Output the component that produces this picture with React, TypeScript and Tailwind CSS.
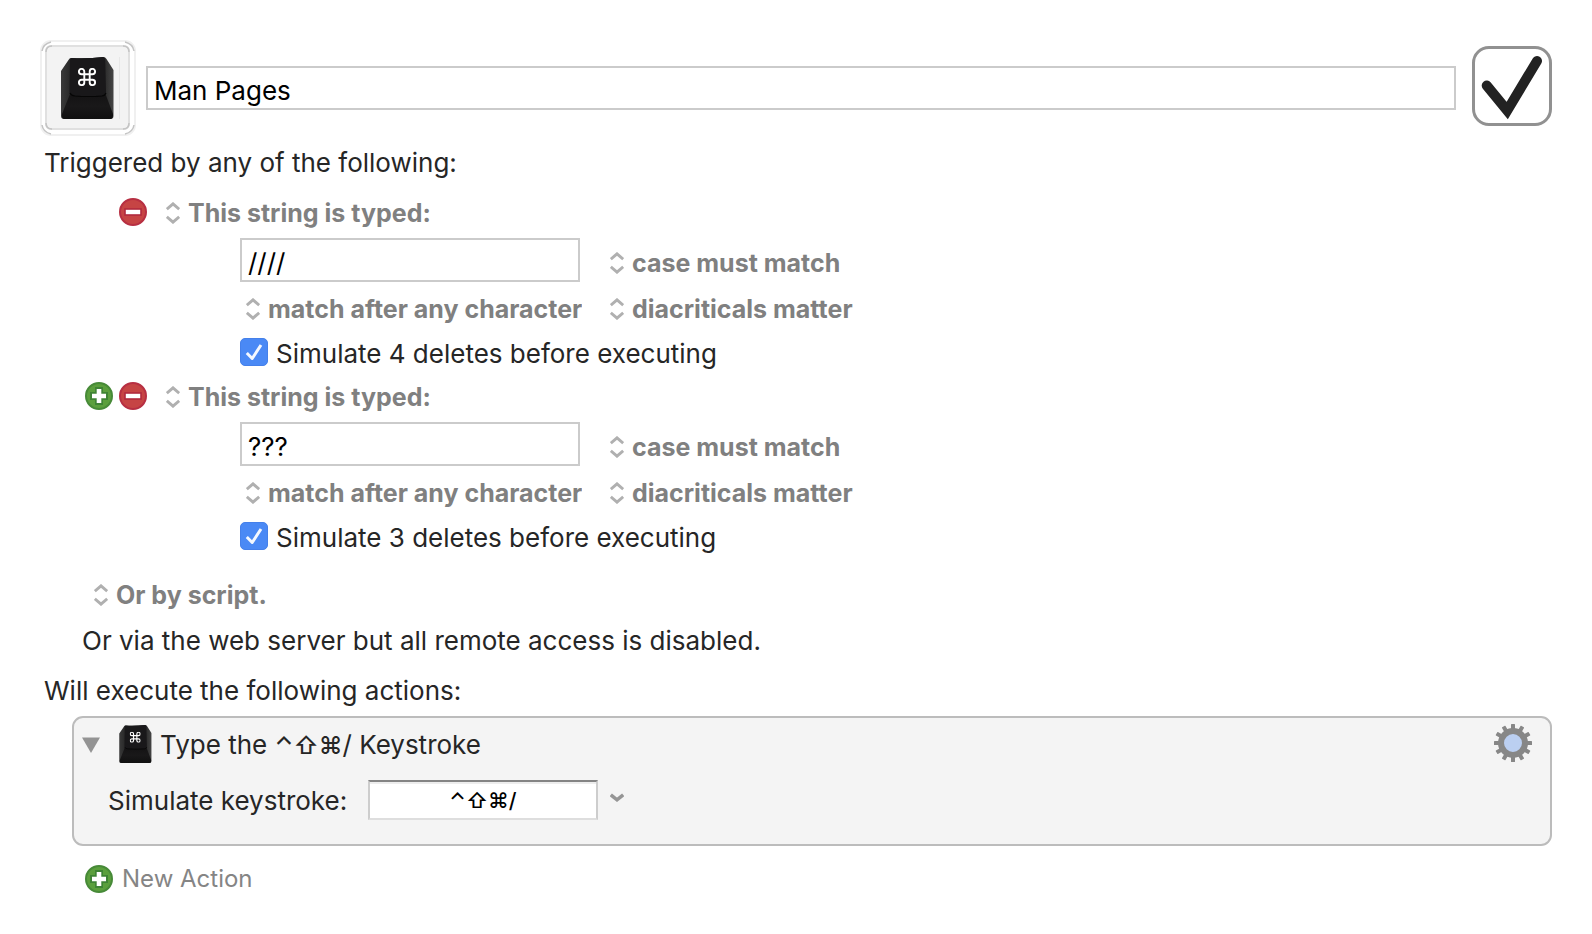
import { useState } from "react";

function CommandGlyph({ x, y, size, width }: { x: number; y: number; size: number; width: number }) {
  return (
    <svg x={x} y={y} width={size} height={size} viewBox="2 2 20 20" fill="none" stroke="#fff" strokeWidth={width}>
      <path d="M15 6v12a3 3 0 1 0 3-3H6a3 3 0 1 0 3 3V6a3 3 0 1 0-3 3h12a3 3 0 1 0-3-3" />
    </svg>
  );
}

function KeyCap({ className, id }: { className: string; id: string }) {
  return (
    <svg className={className} viewBox="0 0 53 62" aria-hidden="true">
      <defs>
        <linearGradient id={id + "-side"} x1="0" x2="1" y1="0" y2="0">
          <stop offset="0" stopColor="#3a3a3a" />
          <stop offset="0.16" stopColor="#2a2a2a" />
          <stop offset="0.5" stopColor="#1a1a1a" />
          <stop offset="0.84" stopColor="#2c2c2c" />
          <stop offset="1" stopColor="#464646" />
        </linearGradient>
        <linearGradient id={id + "-front"} x1="0" x2="0" y1="0" y2="1">
          <stop offset="0" stopColor="#141314" />
          <stop offset="0.5" stopColor="#191819" />
          <stop offset="1" stopColor="#101010" />
        </linearGradient>
      </defs>
      <path d="M10 1Q26 2 42 0Q44.500 0 45.500 2L52.500 13V59Q52.500 62 49.500 62H3Q0 62 0 59V14L7.500 3Q8.500 1 10 1Z" fill={"url(#" + id + "-side)"} />
      <path d="M9 37H44.500L52 57Q52.500 62 49 62H4Q0 62 1 57Z" fill={"url(#" + id + "-front)"} />
      <path d="M11 1Q26 2 42 0Q44 0 44.200 3L45 35Q45 38 42 38.500Q26 40 12 38.500Q8.500 38 8.500 35L9 3Q9 1 11 1Z" fill="#19181a" />
      <path d="M9 36Q10 38.600 14 39Q27 40 41 39Q44 38.600 45 36" fill="none" stroke="#060606" strokeWidth="1.200" />
      <CommandGlyph x={17} y={11} size={18} width={2.1} />
    </svg>
  );
}

function WellFrame() {
  return (
    <svg className="size-24 [grid-area:1/1]" viewBox="0 0 96 96" fill="none" aria-hidden="true">
      <rect x="1" y="1" width="94" height="94" rx="10" stroke="#f0f0f0" strokeWidth="2" />
      <rect x="6" y="6" width="83" height="83" rx="5" fill="#f3f3f3" stroke="#e0e0e0" strokeWidth="2" />
      <g stroke="#c4c4c4" strokeWidth="1.500">
        <path d="M2 11Q3 4 11 2M85 2Q93 4 94 11M94 85Q93 92 85 94M11 94Q3 92 2 85" />
        <path d="M6 12Q6 6 12 6M83 6Q89 6 89 12M89 83Q89 89 83 89M12 89Q6 89 6 83" />
      </g>
      <path d="M79.500 17V79" stroke="#e7e7e7" />
    </svg>
  );
}

function UpDown() {
  return (
    <svg className="h-[22px] w-[14px] shrink-0" viewBox="0 0 14 22" fill="none" stroke="#b0b0b0" strokeWidth="3" aria-hidden="true">
      <path d="M0.800 7.200L7 1.900L13.200 7.200M0.800 14.800L7 20.100L13.200 14.800" />
    </svg>
  );
}

function Menu({ value, label }: { value: string; label: string }) {
  return (
    <label className="flex items-center gap-2">
      <UpDown />
      <select aria-label={label} defaultValue={value} className="field-sizing-content appearance-none bg-transparent text-[25px] leading-8 font-bold text-[#808080] outline-none">
        <option>{value}</option>
      </select>
    </label>
  );
}

function RoundButton({ kind, label }: { kind: "add" | "remove"; label: string }) {
  return (
    <button type="button" aria-label={label} className="size-7 shrink-0">
      <svg className="size-7" viewBox="0 0 28 28" aria-hidden="true">
        {kind === "add" ? (
          <>
            <circle cx="14" cy="14" r="13" fill="#5b9f3d" stroke="#478a38" strokeWidth="2" />
            <path d="M11 6H17V11H22V17H17V22H11V17H6V11H11Z" fill="#fff" stroke="#3f8335" strokeWidth="2" />
            <path d="M11.700 7H16.300V11.700H21V16.300H16.300V21H11.700V16.300H7V11.700H11.700Z" fill="#fff" />
          </>
        ) : (
          <>
            <circle cx="14" cy="14" r="13" fill="#c64444" stroke="#b72f42" strokeWidth="2" />
            <rect x="6" y="11" width="16" height="6" fill="#fff" stroke="#b12a3e" strokeWidth="1.600" />
          </>
        )}
      </svg>
    </button>
  );
}

function StringTrigger({ text, count, addable }: { text: string; count: number; addable: boolean }) {
  const [value, setValue] = useState(text);
  return (
    <section>
      <div className="flex h-10 items-center pl-[85px]">
        <div className="flex w-[62px] justify-end gap-[6px]">
          {addable && <RoundButton kind="add" label="Add trigger" />}
          <RoundButton kind="remove" label="Remove trigger" />
        </div>
        <div className="pt-0.5 pl-[19px]">
          <Menu value="This string is typed:" label="Trigger type" />
        </div>
      </div>
      <div className="grid grid-cols-[340px_auto] justify-start gap-x-[30px] pl-60">
        <div className="flex h-14 items-center">
          <input
            type="text"
            aria-label="Typed string"
            value={value}
            onChange={(e) => setValue(e.target.value)}
            className="h-11 w-full border-2 border-[#cbcbcb] bg-white px-[6px] pt-1 text-[26px] leading-8 text-black outline-none"
          />
        </div>
        <div className="flex h-14 items-center pt-1.5">
          <Menu value="case must match" label="Case" />
        </div>
        <div className="flex h-10 items-center pt-0.5 pl-[6px]">
          <Menu value="match after any character" label="Match position" />
        </div>
        <div className="flex h-10 items-center pt-0.5">
          <Menu value="diacriticals matter" label="Diacriticals" />
        </div>
      </div>
      <label className="flex h-12 items-center gap-2 pl-60">
        <span className="grid size-7 shrink-0">
          <input type="checkbox" defaultChecked className="peer size-7 appearance-none rounded-[5px] border border-[#a0a0a0] [grid-area:1/1] checked:border-[#4580ea] checked:bg-[#4a89f5]" />
          <svg className="invisible size-7 [grid-area:1/1] peer-checked:visible" viewBox="0 0 28 28" fill="none" stroke="#f4f8ff" strokeWidth="3" strokeLinejoin="round" aria-hidden="true">
            <path d="M6.800 15L12.200 20.500L21 7" />
          </svg>
        </span>
        <span className="pt-1">Simulate {count} deletes before executing</span>
      </label>
    </section>
  );
}

const TEETH = [0, 30, 60, 90, 120, 150];

function Gear() {
  return (
    <svg className="size-[38px]" viewBox="0 0 38 38" aria-hidden="true">
      {TEETH.map((angle) => (
        <rect key={angle} x="17" y="0" width="4" height="38" rx="0.500" fill="#878787" transform={"rotate(" + angle + " 19 19)"} />
      ))}
      <circle cx="19" cy="19" r="12" fill="#bbcff1" stroke="#878787" strokeWidth="6" />
    </svg>
  );
}

export default function App() {
  const [name, setName] = useState("Man Pages");
  const [keystroke, setKeystroke] = useState("⌃⇧⌘/");
  return (
    <main className="min-h-screen bg-white pt-10 pb-5 font-['Inter',sans-serif] text-[26px] leading-8 whitespace-nowrap text-[#262626]">
      <header className="flex items-center pr-10 pl-10">
        <button type="button" aria-label="Macro icon" className="grid size-24 shrink-0">
          <WellFrame />
          <KeyCap className="mt-[17px] ml-[21px] h-[62px] w-[53px] [grid-area:1/1]" id="cap-large" />
        </button>
        <input
          type="text"
          aria-label="Macro name"
          value={name}
          onChange={(e) => setName(e.target.value)}
          className="ml-[10px] h-11 min-w-0 flex-1 border-2 border-[#cbcbcb] bg-white px-[6px] pt-1 text-black outline-none"
        />
        <label className="ml-4 grid size-20 shrink-0 self-start pt-[6px]">
          <input type="checkbox" defaultChecked aria-label="Macro enabled" className="peer size-20 appearance-none rounded-[17px] border-3 border-[#919191] bg-white [grid-area:1/1]" />
          <svg className="invisible size-20 [grid-area:1/1] peer-checked:visible" viewBox="0 0 80 80" fill="none" stroke="#222" strokeWidth="10" aria-hidden="true">
            <path d="M14.700 39.500L35.200 64.500L65 15" strokeLinecap="round" strokeMiterlimit="8" />
          </svg>
        </label>
      </header>

      <h2 className="mt-2 flex h-[38px] items-center pl-11">Triggered by any of the following:</h2>

      <div className="pt-[10px]">
        <StringTrigger text="////" count={4} addable={false} />
        <StringTrigger text="???" count={3} addable />
      </div>

      <div className="flex h-[58px] items-center pt-3 pl-[94px]">
        <Menu value="Or by script." label="Script trigger" />
      </div>
      <p className="flex h-11 items-center pt-0.5 pl-[82px]">Or via the web server but all remote access is disabled.</p>

      <h2 className="flex h-[54px] items-center pt-1 pl-11">Will execute the following actions:</h2>

      <section className="mr-10 ml-[72px] rounded-[11px] border-2 border-[#bcbcbc] bg-[#f4f4f4] pb-4">
        <div className="flex h-[54px] items-center pr-[18px] pl-2">
          <button type="button" aria-label="Collapse action" className="shrink-0">
            <svg className="h-4 w-[18px]" viewBox="0 0 18 16" aria-hidden="true">
              <path d="M0 0.500H18L9 16Z" fill="#939393" />
            </svg>
          </button>
          <KeyCap className="mb-0.5 ml-[19px] h-[38px] w-[33px]" id="cap-small" />
          <h3 className="ml-2 flex-1">
            Type the <span className="text-2xl font-medium">⌃⇧⌘</span>/ Keystroke
          </h3>
          <button type="button" aria-label="Action options" className="mb-1 shrink-0">
            <Gear />
          </button>
        </div>
        <div className="flex h-14 items-center pl-[34px]">
          <label htmlFor="keystroke" className="w-[260px] pt-0.5">
            Simulate keystroke:
          </label>
          <input
            id="keystroke"
            type="text"
            value={keystroke}
            onChange={(e) => setKeystroke(e.target.value)}
            className="h-10 w-[230px] border-2 border-t-[#848484] border-r-[#cdcdcd] border-b-[#dedede] border-l-[#cdcdcd] bg-white text-center text-[21px] font-medium text-black shadow-[inset_0_2px_0_#ededed] outline-none"
          />
          <button type="button" aria-label="Keystroke options" className="mb-1 ml-3">
            <svg className="h-[10px] w-[14px]" viewBox="0 0 14 10" fill="none" stroke="#959595" strokeWidth="3.600" aria-hidden="true">
              <path d="M0.800 1.800L7 6.800L13.200 1.800" />
            </svg>
          </button>
        </div>
      </section>

      <div className="flex h-[66px] items-center gap-[9px] pl-[85px]">
        <RoundButton kind="add" label="Add action" />
        <button type="button" className="text-2xl text-[#858585]">
          New Action
        </button>
      </div>
    </main>
  );
}
